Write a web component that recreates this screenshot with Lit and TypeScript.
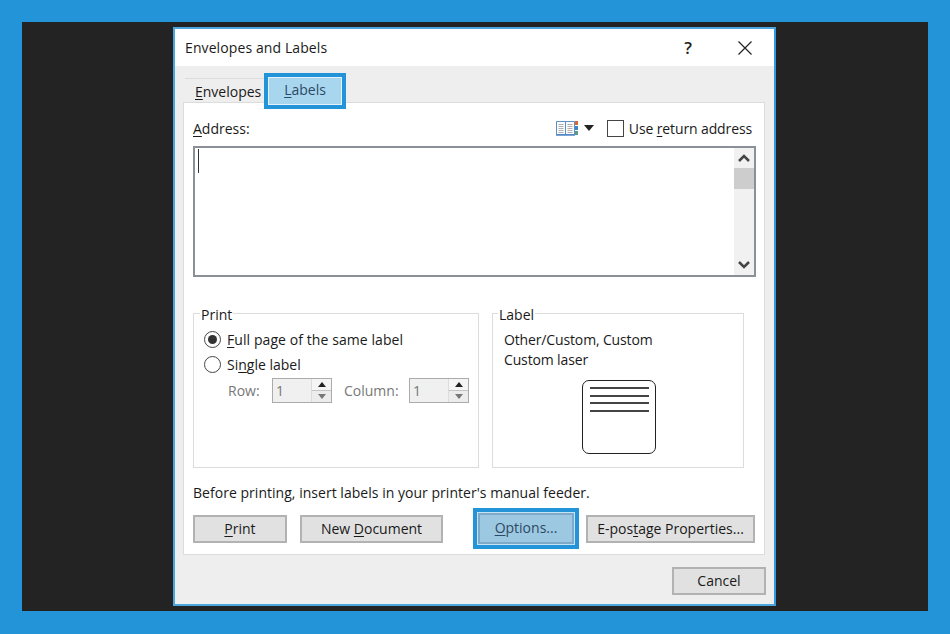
import { LitElement, html, css } from "lit";
import { customElement } from "lit/decorators.js";

@customElement("app-root")
export class AppRoot extends LitElement {
  static styles = css`
    :host { display: block; width: 950px; height: 634px; box-sizing: border-box; background: #2394d8; padding: 22px; font-family: "Open Sans", "Noto Sans", sans-serif; font-size: 14px; color: #1a1a1a; overflow: hidden; }
    * { box-sizing: border-box; }
    u { text-underline-offset: 2px; }
    .frame { background: #232323; height: 589px; padding: 5px 0 0 151px; }
    .dialog { width: 603px; height: 579px; background: #eeeeee; border: 2px solid #4ba6e0; border-right-color: #2e9ae0; display: flex; flex-direction: column; }
    .title { height: 37px; background: #fff; display: flex; align-items: center; padding-left: 10px; flex: none; }
    .title .name { flex: 1; letter-spacing: 0.1px; }
    .help { font-size: 17px; font-weight: 600; width: 20px; text-align: center; margin-right: 40px; color: #222; }
    .close { margin-right: 22px; display: block; }
    .tabs { height: 36px; display: flex; margin-left: 10px; padding-top: 12px; flex: none; position: relative; z-index: 1; }
    .tab { width: 80px; height: 24px; border-top: 1px solid #dcdcdc; padding-left: 10px; line-height: 26px; }
    .tab.focus { width: 82px; height: 36px; margin: -5px 0 0 -1px; border: 4px solid #2394d8; background: #a9d6ef; outline: 1px solid #e4f2fb; outline-offset: -5px; text-align: center; padding: 0; line-height: 26px; color: #2c4a63; }
    .panel { margin-left: 8px; width: 582px; height: 453px; background: #fff; border: 1px solid #dcdcdc; padding: 16px 9px 0; flex: none; }
    .addr { display: flex; align-items: center; height: 18px; }
    .addr .grow { flex: 1; }
    .book { margin-right: 6px; display: block; }
    .caret { margin-right: 13px; display: block; }
    .check { width: 17px; height: 17px; border: 1.5px solid #444; background: #fff; margin-right: 5px; }
    .ret { margin-right: 3px; letter-spacing: -0.12px; }
    .area { margin-top: 9px; width: 563px; height: 131px; border: 2px solid #8b9096; display: flex; justify-content: space-between; padding-left: 3px; }
    .caretline { width: 1px; height: 24px; background: #333; margin-top: 1px; }
    .sb { width: 20px; background: #f1f1f1; display: flex; flex-direction: column; align-items: center; margin-right: 0; }
    .sb .btn { height: 20px; width: 20px; display: flex; align-items: center; justify-content: center; flex: none; }
    .sb .thumb { height: 21px; width: 20px; background: #cdcdcd; flex: none; }
    .sb .fill { flex: 1; }
    .groups { display: flex; margin-top: 36px; gap: 13px; }
    .group { height: 155px; border: 1px solid #dcdcdc; position: relative; }
    .group.print { width: 286px; padding: 13px 0 0 10px; }
    .group.label { width: 252px; padding: 16px 0 0 11px; }
    .legend { position: absolute; top: -8px; left: 6px; background: #fff; padding: 0 1px; line-height: 18px; }
    .group.label .legend { left: 5px; }
    .radio { display: flex; align-items: center; height: 25px; }
    .radio .t1 { letter-spacing: 0.08px; }
    .rb { width: 17px; height: 17px; border: 1.5px solid #444; border-radius: 50%; margin-right: 6px; display: flex; align-items: center; justify-content: center; background: #fff; flex: none; }
    .rb i { width: 9px; height: 9px; border-radius: 50%; background: #333; display: block; }
    .spins { display: flex; align-items: center; margin-top: 1px; padding-left: 24px; color: #777; }
    .spins .lab1 { width: 44px; }
    .spins .lab2 { width: 65px; margin-left: 12px; }
    .spin { width: 60px; height: 25px; border: 1px solid #ababab; background: #f0f0f0; display: flex; justify-content: space-between; padding-left: 3px; line-height: 23px; }
    .arrows { width: 20px; display: flex; flex-direction: column; border-left: 1px solid #dcdcdc; }
    .arrows span { flex: 1; display: flex; align-items: center; justify-content: center; background: #f5f5f5; }
    .arrows span + span { border-top: 1px solid #c4c4c4; background: #ececec; }
    .ltext { line-height: 20px; letter-spacing: -0.14px; }
    .sheet { margin: 10px 0 0 78px; width: 74px; height: 74px; border: 1.5px solid #222; border-radius: 7px; padding: 6px 6px 0 7px; display: flex; flex-direction: column; gap: 5.5px; }
    .sheet i { display: block; height: 2px; background: #444; }
    .note { margin-top: 15px; height: 20px; line-height: 20px; letter-spacing: 0.03px; }
    .btns { display: flex; margin-top: 12px; height: 28px; }
    .b { height: 28px; border: 2px solid #b2b2b2; background: #e1e1e1; display: flex; align-items: center; justify-content: center; padding-bottom: 2px; }
    .b1 { width: 94px; margin-right: 13px; }
    .b2 { width: 143px; margin-right: 36px; }
    .focuswrap { margin: -7px 7px 0 -6px; width: 106px; height: 41px; padding: 1px; background: #c6e3f5; border: 4px solid #2394d8; flex: none; }
    .b3 { width: 96px; height: 31px; background: #9cc8e2; border-color: #7fa9c6; color: #2c4a63; }
    .b4 { width: 169px; }
    .foot { display: flex; justify-content: flex-end; padding: 12px 8px 0 0; }
    .b5 { width: 94px; }
  `;

  private up(c = "#444") {
    return html`<svg width="8" height="5" viewBox="0 0 8 5"><path d="M4 0 8 5H0z" fill="${c}"/></svg>`;
  }
  private down(c = "#777") {
    return html`<svg width="8" height="5" viewBox="0 0 8 5"><path d="M0 0h8L4 5z" fill="${c}"/></svg>`;
  }

  render() {
    return html`
      <div class="frame">
        <div class="dialog">
          <div class="title">
            <span class="name">Envelopes and Labels</span>
            <span class="help">?</span>
            <svg class="close" width="14" height="14" viewBox="0 0 14 14"><path d="M.5.500l13 13M13.500.500l-13 13" stroke="#222" stroke-width="1.200" fill="none"/></svg>
          </div>
          <div class="tabs">
            <div class="tab"><u>E</u>nvelopes</div>
            <div class="tab focus"><u>L</u>abels</div>
          </div>
          <div class="panel">
            <div class="addr">
              <span><u>A</u>ddress:</span>
              <span class="grow"></span>
              <svg class="book" width="22" height="16" viewBox="0 0 22 16">
                <path d="M.5 1.500h9v13h-9zM9.500 1.500h9v13h-9z" fill="#fbfbfb" stroke="#5b8fc7"/>
                <path d="M0 15h19" stroke="#4f86c4" stroke-width="1.500"/>
                <path d="M2.500 4.500h5M2.500 6.500h5M2.500 8.500h5M2.500 10.500h5M2.500 12.500h5M11.500 4.500h5M11.500 6.500h5M11.500 8.500h5M11.500 10.500h5M11.500 12.500h5" stroke="#b0b0b0"/>
                <path d="M19 1h3v4h-3z" fill="#d9662b"/><path d="M19 6h3v4h-3z" fill="#3f86c9"/><path d="M19 11h3v4h-3z" fill="#5a9a8a"/>
              </svg>
              <svg class="caret" width="10" height="6" viewBox="0 0 10 6"><path d="M0 0h10L5 6z" fill="#222"/></svg>
              <span class="check"></span>
              <span class="ret">Use <u>r</u>eturn address</span>
            </div>
            <div class="area">
              <div class="caretline"></div>
              <div class="sb">
                <div class="btn"><svg width="12" height="8" viewBox="0 0 12 8"><path d="M1 7l5-5 5 5" stroke="#444" stroke-width="2.500" fill="none"/></svg></div>
                <div class="thumb"></div>
                <div class="fill"></div>
                <div class="btn"><svg width="12" height="8" viewBox="0 0 12 8"><path d="M1 1l5 5 5-5" stroke="#444" stroke-width="2.500" fill="none"/></svg></div>
              </div>
            </div>
            <div class="groups">
              <div class="group print">
                <span class="legend">Print</span>
                <div class="radio"><span class="rb"><i></i></span><span class="t1"><u>F</u>ull page of the same label</span></div>
                <div class="radio"><span class="rb"></span><span>Si<u>n</u>gle label</span></div>
                <div class="spins">
                  <span class="lab1">Row:</span>
                  <div class="spin"><span>1</span><div class="arrows"><span>${this.up("#222")}</span><span>${this.down()}</span></div></div>
                  <span class="lab2">Column:</span>
                  <div class="spin"><span>1</span><div class="arrows"><span>${this.up("#222")}</span><span>${this.down()}</span></div></div>
                </div>
              </div>
              <div class="group label">
                <span class="legend">Label</span>
                <div class="ltext">Other/Custom, Custom</div>
                <div class="ltext">Custom laser</div>
                <div class="sheet"><i></i><i></i><i></i><i></i></div>
              </div>
            </div>
            <div class="note">Before printing, insert labels in your printer's manual feeder.</div>
            <div class="btns">
              <div class="b b1"><span><u>P</u>rint</span></div>
              <div class="b b2"><span>New <u>D</u>ocument</span></div>
              <div class="focuswrap"><div class="b b3"><span><u>O</u>ptions...</span></div></div>
              <div class="b b4"><span>E-pos<u>t</u>age Properties...</span></div>
            </div>
          </div>
          <div class="foot"><div class="b b5">Cancel</div></div>
        </div>
      </div>
    `;
  }
}
